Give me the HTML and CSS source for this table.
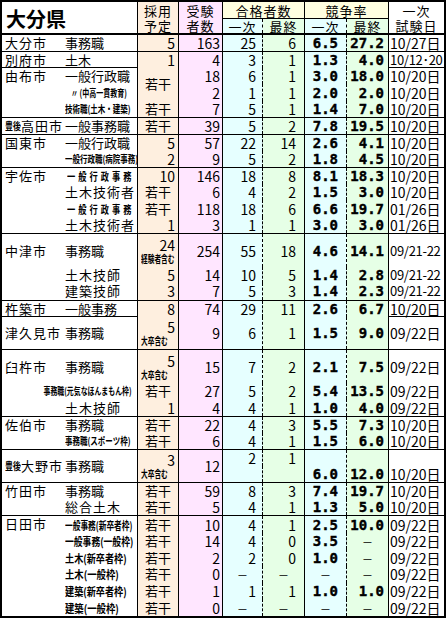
FILE: index.html
```html
<!DOCTYPE html>
<html lang="ja">
<head>
<meta charset="utf-8">
<title>大分県</title>
<link rel="stylesheet" href="styles.css">
</head>
<body>
<div class="sheet">
  <div class="head">
    <div class="hk">大分県</div>
    <div class="ha"><span>採用</span><span>予定</span></div>
    <div class="he"><span>受験</span><span>者数</span></div>
    <div class="hp">合格者数</div>
    <div class="hr">競争率</div>
    <div class="hd"><span>一次</span><span>試験日</span></div>
    <div class="q1">一次</div>
    <div class="q2">最終</div>
    <div class="q3">一次</div>
    <div class="q4">最終</div>
  </div>

  <div class="g n1">
    <div class="ci">大分市</div><div class="jb">事務職</div><div class="ad">5</div><div class="ex">163</div><div class="p1">25</div><div class="p2">6</div><div class="r1">6.5</div><div class="r2">27.2</div><div class="dt">10/27日</div>
  </div>

  <div class="g n1">
    <div class="ci">別府市</div><div class="jb">土木</div><div class="ad">1</div><div class="ex">4</div><div class="p1">3</div><div class="p2">1</div><div class="r1">1.3</div><div class="r2">4.0</div><div class="dt dn">10/12･20</div>
  </div>

  <div class="g n3">
    <div class="ci s3 top">由布市</div><div class="jb">一般行政職</div><div class="ad s2 ctr">若干</div><div class="ex">18</div><div class="p1">6</div><div class="p2">1</div><div class="r1">3.0</div><div class="r2">18.0</div><div class="dt">10/20日</div>
    <div class="jb"><span class="sm k70 ditto">〃 (中高一貫教育)</span></div><div class="ex">2</div><div class="p1">1</div><div class="p2">1</div><div class="r1">2.0</div><div class="r2">2.0</div><div class="dt">10/20日</div>
    <div class="jb"><span class="sm k75">技術職(土木・建築)</span></div><div class="ad ctr">若干</div><div class="ex">7</div><div class="p1">5</div><div class="p2">1</div><div class="r1">1.4</div><div class="r2">7.0</div><div class="dt">10/20日</div>
  </div>

  <div class="g n1">
    <div class="ci"><span class="bg">豊後</span>高田市</div><div class="jb">一般事務職</div><div class="ad ctr">若干</div><div class="ex">39</div><div class="p1">5</div><div class="p2">2</div><div class="r1">7.8</div><div class="r2">19.5</div><div class="dt">10/20日</div>
  </div>

  <div class="g n2">
    <div class="ci s2 top">国東市</div><div class="jb">一般行政職</div><div class="ad">5</div><div class="ex">57</div><div class="p1">22</div><div class="p2">14</div><div class="r1">2.6</div><div class="r2">4.1</div><div class="dt">10/20日</div>
    <div class="jb"><span class="sm k75">一般行政職(病院事務)</span></div><div class="ad">2</div><div class="ex">9</div><div class="p1">5</div><div class="p2">2</div><div class="r1">1.8</div><div class="r2">4.5</div><div class="dt">10/20日</div>
  </div>

  <div class="g n4">
    <div class="ci s4 top">宇佐市</div><div class="jb"><span class="sp">一般行政事務</span></div><div class="ad">10</div><div class="ex">146</div><div class="p1">18</div><div class="p2">8</div><div class="r1">8.1</div><div class="r2">18.3</div><div class="dt">10/20日</div>
    <div class="jb wide">土木技術者</div><div class="ad ctr">若干</div><div class="ex">6</div><div class="p1">4</div><div class="p2">2</div><div class="r1">1.5</div><div class="r2">3.0</div><div class="dt">10/20日</div>
    <div class="jb"><span class="sp">一般行政事務</span></div><div class="ad ctr">若干</div><div class="ex">118</div><div class="p1">18</div><div class="p2">6</div><div class="r1">6.6</div><div class="r2">19.7</div><div class="dt">01/26日</div>
    <div class="jb wide">土木技術者</div><div class="ad">1</div><div class="ex">3</div><div class="p1">1</div><div class="p2">1</div><div class="r1">3.0</div><div class="r2">3.0</div><div class="dt">01/26日</div>
  </div>

  <div class="g n4">
    <div class="ci s2">中津市</div><div class="jb s2">事務職</div><div class="ad s2 stk"><span class="v">24</span><span class="note">経験者含む</span></div><div class="ex s2">254</div><div class="p1 s2">55</div><div class="p2 s2">18</div><div class="r1 s2">4.6</div><div class="r2 s2">14.1</div><div class="dt dn s2">09/21-22</div>
    <div class="ci"></div><div class="jb wide">土木技師</div><div class="ad">5</div><div class="ex">14</div><div class="p1">10</div><div class="p2">5</div><div class="r1">1.4</div><div class="r2">2.8</div><div class="dt dn">09/21-22</div>
    <div class="ci"></div><div class="jb wide">建築技師</div><div class="ad">3</div><div class="ex">7</div><div class="p1">5</div><div class="p2">3</div><div class="r1">1.4</div><div class="r2">2.3</div><div class="dt dn">09/21-22</div>
  </div>

  <div class="g n1">
    <div class="ci">杵築市</div><div class="jb">一般事務</div><div class="ad">8</div><div class="ex">74</div><div class="p1">29</div><div class="p2">11</div><div class="r1">2.6</div><div class="r2">6.7</div><div class="dt">10/20日</div>
  </div>

  <div class="g n2">
    <div class="ci s2">津久見市</div><div class="jb s2">事務職</div><div class="ad s2 stk"><span class="v">5</span><span class="note">大卒含む</span></div><div class="ex s2">9</div><div class="p1 s2">6</div><div class="p2 s2">1</div><div class="r1 s2">1.5</div><div class="r2 s2">9.0</div><div class="dt s2">09/22日</div>
  </div>

  <div class="g n4">
    <div class="ci s2">臼杵市</div><div class="jb s2">事務職</div><div class="ad s2 stk"><span class="v">5</span><span class="note">大卒含む</span></div><div class="ex s2">15</div><div class="p1 s2">7</div><div class="p2 s2">2</div><div class="r1 s2">2.1</div><div class="r2 s2">7.5</div><div class="dt s2">09/22日</div>
    <div class="ci"></div><div class="jb rt"><span class="sm k69 ro">事務職(元気なほんまもん枠)</span></div><div class="ad ctr">若干</div><div class="ex">27</div><div class="p1">5</div><div class="p2">2</div><div class="r1">5.4</div><div class="r2">13.5</div><div class="dt">09/22日</div>
    <div class="ci"></div><div class="jb wide">土木技師</div><div class="ad">1</div><div class="ex">4</div><div class="p1">4</div><div class="p2">1</div><div class="r1">1.0</div><div class="r2">4.0</div><div class="dt">09/22日</div>
  </div>

  <div class="g n2">
    <div class="ci s2 top">佐伯市</div><div class="jb">事務職</div><div class="ad ctr">若干</div><div class="ex">22</div><div class="p1">4</div><div class="p2">3</div><div class="r1">5.5</div><div class="r2">7.3</div><div class="dt">10/20日</div>
    <div class="jb"><span class="sm k75">事務職(スポーツ枠)</span></div><div class="ad ctr">若干</div><div class="ex">6</div><div class="p1">4</div><div class="p2">1</div><div class="r1">1.5</div><div class="r2">6.0</div><div class="dt">10/20日</div>
  </div>

  <div class="g n2">
    <div class="ci s2"><span class="bg">豊後</span>大野市</div><div class="jb s2">事務職</div><div class="ad s2 stk"><span class="v">3</span><span class="note">大卒含む</span></div><div class="ex s2">12</div><div class="p1">2</div><div class="p2">1</div><div class="r1 s2 bot">6.0</div><div class="r2 s2 bot">12.0</div><div class="dt s2 bot">10/20日</div>
    <div class="p1"></div><div class="p2"></div>
  </div>

  <div class="g n2">
    <div class="ci s2 top">竹田市</div><div class="jb">事務職</div><div class="ad ctr">若干</div><div class="ex">59</div><div class="p1">8</div><div class="p2">3</div><div class="r1">7.4</div><div class="r2">19.7</div><div class="dt">10/20日</div>
    <div class="jb wide">総合土木</div><div class="ad ctr">若干</div><div class="ex">5</div><div class="p1">4</div><div class="p2">1</div><div class="r1">1.3</div><div class="r2">5.0</div><div class="dt">10/20日</div>
  </div>

  <div class="g n6">
    <div class="ci s6 top">日田市</div><div class="jb"><span class="hs k70">一般事務(新卒者枠)</span></div><div class="ad ctr">若干</div><div class="ex">10</div><div class="p1">4</div><div class="p2">1</div><div class="r1">2.5</div><div class="r2">10.0</div><div class="dt">09/22日</div>
    <div class="jb"><span class="hs k80">一般事務(一般枠)</span></div><div class="ad ctr">若干</div><div class="ex">14</div><div class="p1">4</div><div class="p2">0</div><div class="r1">3.5</div><div class="r2 na">—</div><div class="dt">09/22日</div>
    <div class="jb"><span class="hs k83">土木(新卒者枠)</span></div><div class="ad ctr">若干</div><div class="ex">2</div><div class="p1">2</div><div class="p2">0</div><div class="r1">1.0</div><div class="r2 na">—</div><div class="dt">09/22日</div>
    <div class="jb"><span class="hs k85">土木(一般枠)</span></div><div class="ad ctr">若干</div><div class="ex">0</div><div class="p1 na">—</div><div class="p2 na">—</div><div class="r1 na">—</div><div class="r2 na">—</div><div class="dt">09/22日</div>
    <div class="jb"><span class="hs k83">建築(新卒者枠)</span></div><div class="ad ctr">若干</div><div class="ex">1</div><div class="p1">1</div><div class="p2">1</div><div class="r1">1.0</div><div class="r2">1.0</div><div class="dt">09/22日</div>
    <div class="jb"><span class="hs k85">建築(一般枠)</span></div><div class="ad ctr">若干</div><div class="ex">0</div><div class="p1 na">—</div><div class="p2 na">—</div><div class="r1 na">—</div><div class="r2 na">—</div><div class="dt">09/22日</div>
  </div>
</div>
</body>
</html>
```

FILE: styles.css
```css
:root {
  --peach: #feefdf;
  --pink: #ffe6ff;
  --cyan: #e6ffff;
  --green: #e6ffe6;
  --yellow: #ffffe0;
}

html, body {
  margin: 0;
  padding: 0;
  background: #fff;
}

body {
  font-family: "Noto Sans CJK JP", "Noto Sans", sans-serif;
  color: #000;
}

.sheet {
  width: 446px;
  box-sizing: border-box;
  border: 2px solid #000;
}

.head,
.g {
  display: grid;
  grid-template-columns: 60px 76px 41px 44px 40px 42px 42px 42px 55px;
}

/* ---------- header ---------- */
.head {
  grid-template-rows: 17px 14px;
  border-bottom: 2px solid #000;
}

.head > div {
  display: flex;
  flex-direction: column;
  align-items: center;
  justify-content: center;
  box-sizing: border-box;
  font-size: 13px;
  line-height: 15px;
  letter-spacing: 1px;
  white-space: nowrap;
}

.head .hk {
  grid-column: 1 / 3;
  grid-row: 1 / 3;
  align-items: flex-start;
  justify-content: flex-end;
  padding: 0 0 2px 4px;
  font-size: 20px;
  line-height: 24px;
  font-weight: bold;
  letter-spacing: 0;
  border-right: 1px solid #000;
}

.head .ha {
  grid-column: 3;
  grid-row: 1 / 3;
  background: var(--peach);
  border-right: 1px solid #000;
}

.head .he {
  grid-column: 4;
  grid-row: 1 / 3;
  background: var(--pink);
  border-right: 1px solid #000;
}

.head .hp {
  grid-column: 5 / 7;
  grid-row: 1;
  background: var(--yellow);
  border-right: 1px solid #000;
  border-bottom: 1px solid #000;
}

.head .hr {
  grid-column: 7 / 9;
  grid-row: 1;
  background: var(--yellow);
  border-right: 1px solid #000;
  border-bottom: 1px solid #000;
}

.head .hd {
  grid-column: 9;
  grid-row: 1 / 3;
}

.head .q1 { grid-column: 5; grid-row: 2; background: var(--cyan); border-right: 1px dashed #000; }
.head .q2 { grid-column: 6; grid-row: 2; background: var(--green); border-right: 1px solid #000; }
.head .q3 { grid-column: 7; grid-row: 2; background: var(--cyan); border-right: 1px dashed #000; }
.head .q4 { grid-column: 8; grid-row: 2; background: var(--green); border-right: 1px solid #000; }

/* ---------- body groups ---------- */
.g {
  box-sizing: border-box;
  border-bottom: 1px solid #000;
}

.g:last-child {
  border-bottom: 0;
}

.n1 { height: 16.6px; grid-template-rows: 1fr; }
.n2 { height: 33.2px; grid-template-rows: repeat(2, 1fr); }
.n3 { height: 49.8px; grid-template-rows: repeat(3, 1fr); }
.n4 { height: 66.4px; grid-template-rows: repeat(4, 1fr); }
.n6 { height: 99.6px; grid-template-rows: repeat(6, 1fr); }

.g > div {
  display: flex;
  align-items: center;
  box-sizing: border-box;
  min-width: 0;
  white-space: nowrap;
  font-size: 14px;
  line-height: 16px;
}

.g .ci {
  grid-column: 1;
  padding-left: 3px;
  font-size: 13px;
  letter-spacing: 1px;
}

.g .jb {
  grid-column: 2;
  padding-left: 3px;
  font-size: 13px;
  border-right: 1px solid #000;
}

.g .ad {
  grid-column: 3;
  justify-content: flex-end;
  padding-right: 3px;
  background: var(--peach);
  border-right: 1px solid #000;
}

.g .ex {
  grid-column: 4;
  justify-content: flex-end;
  padding-right: 2px;
  background: var(--pink);
  border-right: 1px solid #000;
}

.g .p1 {
  grid-column: 5;
  justify-content: flex-end;
  padding-right: 6px;
  background: var(--cyan);
  border-right: 1px dashed #000;
}

.g .p2 {
  grid-column: 6;
  justify-content: flex-end;
  padding-right: 8px;
  background: var(--green);
  border-right: 1px solid #000;
}

.g .r1 {
  grid-column: 7;
  justify-content: flex-end;
  padding-right: 8px;
  background: var(--cyan);
  border-right: 1px dashed #000;
}

.g .r2 {
  grid-column: 8;
  justify-content: flex-end;
  padding-right: 4px;
  background: var(--green);
  border-right: 1px solid #000;
}

.g .r1,
.g .r2 {
  font-family: "DejaVu Sans Mono", monospace;
  font-weight: bold;
  -webkit-text-stroke: 0.4px #000;
}

.g .dt {
  grid-column: 9;
  padding-left: 1px;
}

.g .dn {
  font-size: 13px;
  letter-spacing: -0.3px;
}

/* spans & alignment modifiers */
.s2 { grid-row: span 2; }
.s3 { grid-row: span 3; }
.s4 { grid-row: span 4; }
.s6 { grid-row: span 6; }

.g .top { align-items: flex-start; }
.g .bot { align-items: flex-end; }

.g .ctr {
  justify-content: center;
  padding-right: 0;
  font-size: 13px;
}

.g .wide { letter-spacing: 1px; }

.g .rt {
  justify-content: flex-end;
  padding-right: 5px;
}

.g .na {
  justify-content: center;
  padding: 0;
  font-family: "Noto Sans CJK JP", sans-serif;
  font-weight: normal;
  font-size: 10px;
  -webkit-text-stroke: 0;
}

/* stacked number + note */
.g .stk {
  flex-direction: column;
  justify-content: center;
  align-items: stretch;
  padding: 0 3px;
}

.stk .v {
  text-align: right;
  line-height: 15px;
}

.stk .note {
  font-size: 10px;
  font-weight: bold;
  line-height: 11px;
  transform: scaleX(0.67);
  transform-origin: left center;
}

/* condensed small labels */
.sm,
.hs,
.bg,
.sp {
  display: inline-block;
  font-weight: bold;
  letter-spacing: 0;
  transform-origin: left center;
}

.sm { font-size: 10px; }
.hs { font-size: 11px; }

.ro { transform-origin: right center; }
.ditto { margin-left: 6px; }

.k69 { transform: scaleX(0.69); }
.k70 { transform: scaleX(0.7); }
.k75 { transform: scaleX(0.75); }
.k80 { transform: scaleX(0.8); }
.k83 { transform: scaleX(0.83); }
.k85 { transform: scaleX(0.85); }

.bg {
  font-size: 10px;
  transform: scaleX(0.8);
  margin-right: -4px;
}

.sp {
  font-size: 11px;
  letter-spacing: 4px;
  transform: scaleX(0.75);
  margin-left: 2px;
}
```
